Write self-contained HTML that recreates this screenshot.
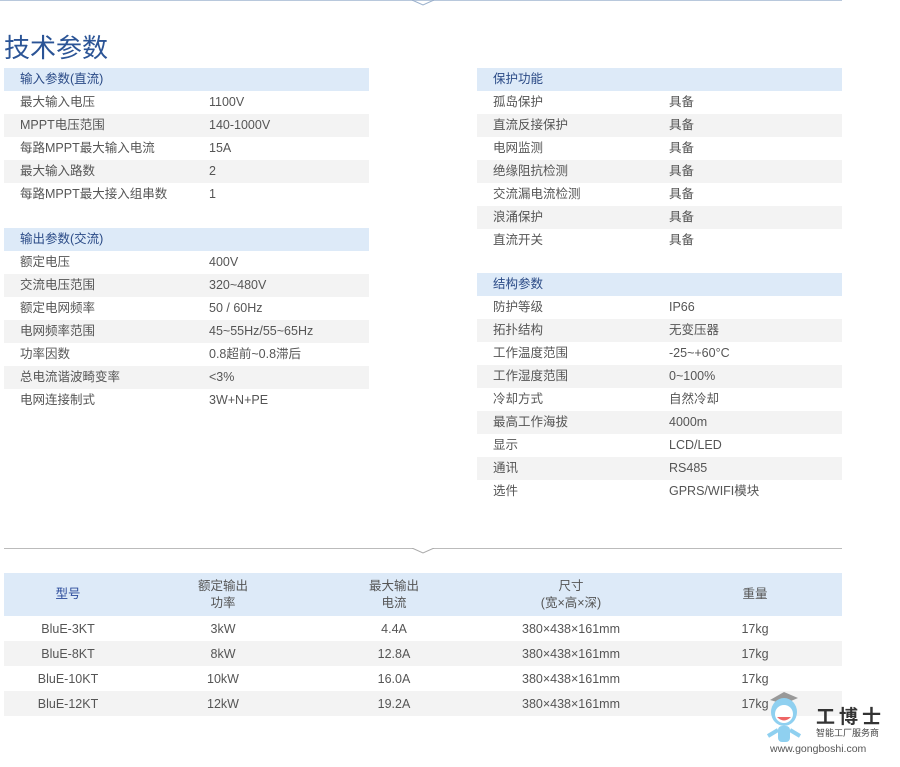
<!DOCTYPE html>
<html><head><meta charset="utf-8"><style>
body{margin:0;width:900px;height:767px;background:#fff;position:relative;font-family:"Liberation Sans","Noto Sans CJK SC",sans-serif;overflow:hidden}
.a{position:absolute}
.t{position:absolute;width:365px;font-size:12.5px;color:#555}
.t div{height:23px;line-height:23px;position:relative}
.t div.h{background:#ddeaf8;color:#2a4a86}
.t div.g{background:#f3f3f3}
.t span{position:absolute;left:16px}
.t span+span{left:205px}
.t div.h span{left:16px}
table{position:absolute;left:4px;top:573px;width:838px;border-collapse:collapse;font-size:12.5px;color:#555;text-align:center}
td{padding:0}
tr.hd{background:#ddeaf8;height:43px;line-height:17px}
tr.r{height:25px}
tr.g{background:#f3f3f3}
</style></head><body>
<div class="a" style="left:0;top:0;width:842px;height:1px;background:#b8c8dc"></div>
<svg class="a" style="left:410px;top:0" width="26" height="6"><path d="M2 0L13 5L24 0" fill="none" stroke="#9ab0cc"/></svg>
<div class="a" style="left:4px;top:28px;font-size:26px;color:#2b5496">技术参数</div>

<div class="t" style="left:4px;top:68px">
<div class="h"><span>输入参数(直流)</span></div>
<div><span>最大输入电压</span><span>1100V</span></div>
<div class="g"><span>MPPT电压范围</span><span>140-1000V</span></div>
<div><span>每路MPPT最大输入电流</span><span>15A</span></div>
<div class="g"><span>最大输入路数</span><span>2</span></div>
<div><span>每路MPPT最大接入组串数</span><span>1</span></div>
</div>
<div class="t" style="left:4px;top:228px">
<div class="h"><span>输出参数(交流)</span></div>
<div><span>额定电压</span><span>400V</span></div>
<div class="g"><span>交流电压范围</span><span>320~480V</span></div>
<div><span>额定电网频率</span><span>50 / 60Hz</span></div>
<div class="g"><span>电网频率范围</span><span>45~55Hz/55~65Hz</span></div>
<div><span>功率因数</span><span>0.8超前~0.8滞后</span></div>
<div class="g"><span>总电流谐波畸变率</span><span>&lt;3%</span></div>
<div><span>电网连接制式</span><span>3W+N+PE</span></div>
</div>
<div class="t" style="left:477px;top:68px">
<div class="h"><span>保护功能</span></div>
<div><span>孤岛保护</span><span style="left:192px">具备</span></div>
<div class="g"><span>直流反接保护</span><span style="left:192px">具备</span></div>
<div><span>电网监测</span><span style="left:192px">具备</span></div>
<div class="g"><span>绝缘阻抗检测</span><span style="left:192px">具备</span></div>
<div><span>交流漏电流检测</span><span style="left:192px">具备</span></div>
<div class="g"><span>浪涌保护</span><span style="left:192px">具备</span></div>
<div><span>直流开关</span><span style="left:192px">具备</span></div>
</div>
<div class="t" style="left:477px;top:273px">
<div class="h"><span>结构参数</span></div>
<div><span>防护等级</span><span style="left:192px">IP66</span></div>
<div class="g"><span>拓扑结构</span><span style="left:192px">无变压器</span></div>
<div><span>工作温度范围</span><span style="left:192px">-25~+60°C</span></div>
<div class="g"><span>工作湿度范围</span><span style="left:192px">0~100%</span></div>
<div><span>冷却方式</span><span style="left:192px">自然冷却</span></div>
<div class="g"><span>最高工作海拔</span><span style="left:192px">4000m</span></div>
<div><span>显示</span><span style="left:192px">LCD/LED</span></div>
<div class="g"><span>通讯</span><span style="left:192px">RS485</span></div>
<div><span>选件</span><span style="left:192px">GPRS/WIFI模块</span></div>
</div>

<div class="a" style="left:4px;top:548px;width:838px;height:1px;background:#bbb"></div>
<svg class="a" style="left:411px;top:548px" width="24" height="6"><path d="M1 0L12 5L23 0" fill="#fff" stroke="#aaa"/></svg>

<table>
<colgroup><col style="width:128px"><col style="width:182px"><col style="width:160px"><col style="width:194px"><col></colgroup>
<tr class="hd"><td style="color:#2a4a9a">型号</td><td>额定输出<br>功率</td><td>最大输出<br>电流</td><td>尺寸<br>(宽×高×深)</td><td>重量</td></tr>
<tr class="r"><td>BluE-3KT</td><td>3kW</td><td>4.4A</td><td>380×438×161mm</td><td>17kg</td></tr>
<tr class="r g"><td>BluE-8KT</td><td>8kW</td><td>12.8A</td><td>380×438×161mm</td><td>17kg</td></tr>
<tr class="r"><td>BluE-10KT</td><td>10kW</td><td>16.0A</td><td>380×438×161mm</td><td>17kg</td></tr>
<tr class="r g"><td>BluE-12KT</td><td>12kW</td><td>19.2A</td><td>380×438×161mm</td><td>17kg</td></tr>
</table>

<svg class="a" style="left:764px;top:684px" width="50" height="72">
<path d="M6 16L20 8L34 14L20 20Z" fill="#999"/>
<ellipse cx="20" cy="28" rx="13" ry="14" fill="#8fd0f0"/>
<ellipse cx="20" cy="30" rx="9" ry="9" fill="#fff"/>
<path d="M13 33Q20 40 27 33" fill="#e66" />
<rect x="14" y="42" width="12" height="16" rx="4" fill="#8fd0f0"/>
<path d="M14 46L4 52M26 46L36 52" stroke="#8fd0f0" stroke-width="4"/>
</svg>
<div class="a" style="left:816px;top:702px;font-size:19px;color:#333;letter-spacing:4px;font-weight:bold">工博士</div>
<div class="a" style="left:816px;top:726px;font-size:9px;color:#444">智能工厂服务商</div>
<div class="a" style="left:770px;top:743px;font-size:10.5px;color:#555">www.gongboshi.com</div>
</body></html>
